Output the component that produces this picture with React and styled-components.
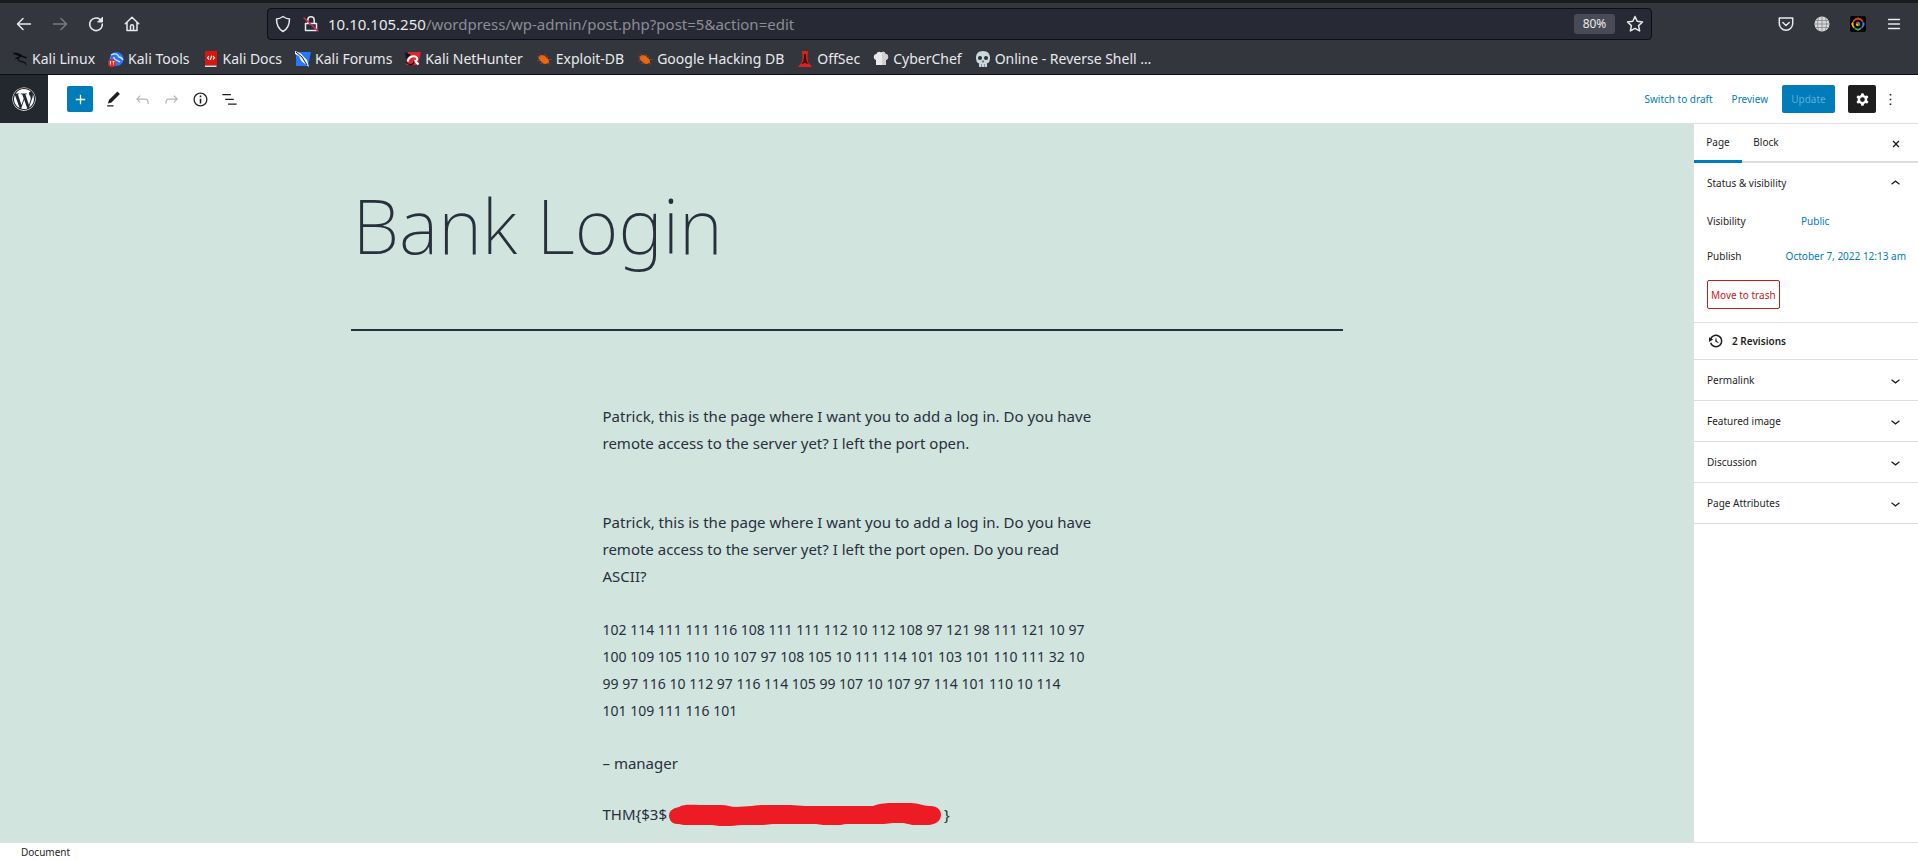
import React from "react";
import styled, { createGlobalStyle } from "styled-components";
import { FaWordpress } from "react-icons/fa";

const GlobalStyle = createGlobalStyle`
  *, *::before, *::after { box-sizing: border-box; }
  body { margin: 0; background: #fff; }
  body, button, input { font-family: "Noto Sans", "Open Sans", sans-serif; }
  button { border: 0; padding: 0; background: none; color: inherit; font-size: inherit; cursor: pointer; }
  a { text-decoration: none; color: inherit; }
  svg { display: block; flex: none; }
  h1, p, dl, dd, dt { margin: 0; }
`;

const Window = styled.div`
  display: flex;
  flex-direction: column;
  height: 100vh;
`;

/* ---------- browser chrome ---------- */

const Chrome = styled.header`
  background: #33363d;
  border-top: 3px solid #191b1f;
  border-bottom: 1px solid #0d0e12;
  color: #e8e9ec;
`;

const NavBar = styled.div`
  display: flex;
  align-items: center;
  height: 41px;
  padding: 0 15px;
`;

const NavButtons = styled.div`
  display: flex;
  gap: 18px;
  width: 252px;
`;

const IconButton = styled.button`
  display: grid;
  place-items: center;
  width: ${(p) => p.$size || 18}px;
  height: ${(p) => p.$size || 18}px;
  color: ${(p) => p.$color || "inherit"};
`;

const UrlBar = styled.form`
  flex: 1;
  display: flex;
  align-items: center;
  height: 32px;
  margin-right: 125px;
  padding: 0 7px 0 6px;
  border: 1px solid #0d0e13;
  border-radius: 4px;
  background: #272935;
  font-size: 15px;
`;

const UrlIcons = styled.div`
  display: flex;
  gap: 10px;
  margin-right: 8px;
`;

const UrlInput = styled.input`
  flex: 1;
  min-width: 0;
  padding: 0;
  border: 0;
  outline: 0;
  background: none;
  color: #8c8d94;
  font-size: 15px;
`;

const ZoomLevel = styled.button`
  width: 41px;
  height: 20px;
  margin-right: 11px;
  border-radius: 3px;
  background: #484b55;
  font-size: 12px;
`;

const Extensions = styled.div`
  display: flex;
  gap: 18px;
`;

const Bookmarks = styled.nav`
  display: flex;
  align-items: center;
  gap: 13px;
  height: 30px;
  padding: 0 12px;
`;

const Bookmark = styled.a`
  display: flex;
  align-items: center;
  gap: 4px;
  font-size: 14px;
  line-height: 20px;
  white-space: nowrap;
`;

/* ---------- editor top bar ---------- */

const EditorBar = styled.header`
  display: flex;
  align-items: center;
  height: 49px;
  padding-right: 18px;
  border-bottom: 1px solid #e0e0e0;
  background: #fff;
  color: #1e1e1e;
  font-size: 10px;
`;

const SiteLogo = styled.a`
  display: grid;
  place-items: center;
  width: 48px;
  height: 48px;
  background: #23282e;
  color: #fff;
`;

const Tools = styled.div`
  flex: 1;
  display: flex;
  align-items: center;
  gap: 9px;
  padding-left: 19px;
`;

const AddButton = styled(IconButton)`
  margin-right: 1px;
  border-radius: 2px;
  background: #007cba;
  color: #fff;
`;

const Actions = styled.div`
  display: flex;
  align-items: center;
  color: #007cba;
`;

const TextButton = styled.button`
  margin-right: 19px;
`;

const UpdateButton = styled.button`
  width: 53px;
  height: 28px;
  margin: 0 13px 0 -5px;
  border-radius: 2px;
  background: #007cba;
  color: #5fadd6;
`;

const SettingsButton = styled(IconButton)`
  margin-right: 5px;
  border-radius: 2px;
  background: #1e1e1e;
  color: #fff;
`;

/* ---------- editor body ---------- */

const Workspace = styled.div`
  flex: 1;
  display: flex;
  min-height: 0;
`;

const Canvas = styled.main`
  flex: 1;
  min-width: 0;
  overflow: hidden;
  background: #d1e4dd;
  color: #28303d;
`;

const TitleBlock = styled.div`
  max-width: 992px;
  margin: 0 auto;
  padding: 49px 2px 52px;
  border-bottom: 2px solid #28303d;
`;

const Title = styled.h1`
  font-size: 75px;
  font-weight: 200;
  line-height: 104px;
`;

const Content = styled.div`
  max-width: 488px;
  margin: 0 auto;
  padding-top: 72px;
  font-size: 15px;
  line-height: 27px;
`;

const Paragraph = styled.p`
  margin-bottom: ${(p) => p.$gap || 26}px;
  white-space: nowrap;
`;

const CodeParagraph = styled(Paragraph)`
  font-size: 14px;
`;

const FlagLine = styled(Paragraph)`
  display: flex;
  align-items: center;
  gap: 2px;
`;

/* ---------- settings sidebar ---------- */

const Sidebar = styled.aside`
  width: 225px;
  border-left: 1px solid #e0e0e0;
  background: #fff;
  color: #1e1e1e;
  font-size: 10px;
`;

const Tabs = styled.div`
  display: flex;
  align-items: stretch;
  height: 39px;
  padding-right: 13px;
  box-shadow: inset 0 -2px #ddd;
`;

const Tab = styled.button`
  width: 48px;
  border-bottom: 3px solid ${(p) => (p.$active ? "#007cba" : "transparent")};
`;

const CloseTab = styled(IconButton)`
  align-self: center;
  margin-left: auto;
`;

const Panel = styled.section`
  border-bottom: 1px solid #ddd;
`;

const PanelHeader = styled.button`
  display: flex;
  align-items: center;
  justify-content: space-between;
  width: 100%;
  height: 40px;
  padding: 0 13px;
`;

const Fields = styled.dl`
  display: grid;
  grid-template-columns: 78px 1fr;
  row-gap: 7px;
  padding: 4px 12px 0 13px;
  line-height: 28px;
  white-space: nowrap;
`;

const FieldValue = styled.dd`
  display: flex;
  justify-content: ${(p) => (p.$end ? "flex-end" : "flex-start")};
  padding-left: ${(p) => (p.$end ? 0 : 16)}px;
  color: #007cba;
`;

const TrashButton = styled.button`
  height: 29px;
  margin: 10px 13px 13px;
  padding: 0 3px;
  border: 1px solid #cc1818;
  border-radius: 2px;
  color: #cc1818;
`;

const Revisions = styled.button`
  display: flex;
  align-items: center;
  gap: 8px;
  height: 36px;
  padding: 0 14px;
  font-weight: 600;
`;

const StatusBar = styled.footer`
  height: 19px;
  padding-left: 21px;
  border-top: 1px solid #e0e0e0;
  background: #fff;
  color: #1e1e1e;
  font-size: 10px;
  line-height: 18px;
`;

/* ---------- drawings ---------- */

const Glyph = ({ d, size = 19, box = 24 }) => (
  <svg width={size} height={size} viewBox={`0 0 ${box} ${box}`} fill="currentColor" fillRule="evenodd" aria-hidden="true">
    <path d={d} />
  </svg>
);

const Line = ({ children, size = 18 }) => (
  <svg width={size} height={size} viewBox="0 0 18 18" fill="none" stroke="currentColor" strokeWidth="1.5" strokeLinecap="round" strokeLinejoin="round" aria-hidden="true">
    {children}
  </svg>
);

const Mark = ({ children }) => (
  <svg width="16" height="16" viewBox="0 0 16 16" aria-hidden="true">{children}</svg>
);

const paths = {
  plus: "M18 11.2h-5.2V6h-1.6v5.2H6v1.6h5.2V18h1.6v-5.2H18z",
  edit: "M20.1 5.1L16.9 2 6.2 12.7l-1.3 4.4 4.5-1.3L20.1 5.1zM4 20.8h8v-1.5H4v1.5z",
  undo: "M18.3 11.7c-.6-.6-1.4-.9-2.3-.9H6.7l2.9-3.3-1.1-1-4.5 5L8.5 16l1-1-2.7-2.7H16c.5 0 .9.2 1.3.5 1 1 1 3.4 1 4.5v.3h1.5v-.2c0-1.5 0-4.3-1.5-5.7z",
  redo: "M15.6 6.5l-1.1 1 2.9 3.3H8c-.9 0-1.7.3-2.3.9-1.4 1.5-1.4 4.2-1.4 5.6v.2h1.5v-.3c0-1.1 0-3.5 1-4.5.3-.3.7-.5 1.3-.5h9.2L14.5 15l1.1 1.1 4.6-4.6-4.6-5z",
  info: "M12 3.2c-4.8 0-8.8 3.9-8.8 8.8 0 4.8 3.9 8.8 8.8 8.8 4.8 0 8.8-3.9 8.8-8.8 0-4.8-4-8.8-8.8-8.8zm0 16c-4 0-7.2-3.3-7.2-7.2C4.8 8 8 4.8 12 4.8s7.2 3.3 7.2 7.2c0 4-3.2 7.2-7.2 7.2zM11 17h2v-6h-2v6zm0-8h2V7h-2v2z",
  list: "M13.8 5.2H3v1.5h10.8V5.2zm-3.6 12v1.5H21v-1.5H10.2zm7.2-6H6.6v1.5h10.8v-1.5z",
  cog: "M10.289 4.836A1 1 0 0111.275 4h1.306a1 1 0 01.987.836l.244 1.466c.787.26 1.503.679 2.108 1.218l1.393-.522a1 1 0 011.216.437l.653 1.13a1 1 0 01-.23 1.273l-1.148.944a6.025 6.025 0 010 2.435l1.149.946a1 1 0 01.23 1.272l-.653 1.13a1 1 0 01-1.216.437l-1.394-.522c-.605.54-1.32.958-2.108 1.218l-.244 1.466a1 1 0 01-.987.836h-1.306a1 1 0 01-.986-.836l-.244-1.466a5.995 5.995 0 01-2.108-1.218l-1.394.522a1 1 0 01-1.217-.436l-.653-1.131a1 1 0 01.23-1.272l1.149-.946a6.026 6.026 0 010-2.435l-1.148-.944a1 1 0 01-.23-1.272l.653-1.131a1 1 0 011.217-.437l1.393.522a5.994 5.994 0 012.108-1.218l.244-1.466zM14.929 12a3 3 0 11-6 0 3 3 0 016 0z",
  more: "M13 19h-2v-2h2v2zm0-6h-2v-2h2v2zm0-6h-2V5h2v2z",
  up: "M6.5 12.4L12 8l5.5 4.4-.9 1.2L12 10l-4.5 3.6-1-1.2z",
  down: "M17.5 11.6L12 16l-5.5-4.4.9-1.2L12 14l4.5-3.6 1 1.2z",
  close: "M12 13.4l3.700 3.700 1.400-1.400L13.400 12l3.700-3.700-1.400-1.400L12 10.600 8.300 6.900 6.900 8.300 10.600 12l-3.700 3.700 1.400 1.400L12 13.400z",
  backup: "M13.65 2.88c3.93 2.01 5.48 6.84 3.47 10.77s-6.83 5.48-10.77 3.47c-1.87-.96-3.2-2.56-3.86-4.4l1.64-1.03c.45 1.57 1.52 2.95 3.08 3.76 3.01 1.54 6.69.35 8.23-2.66 1.55-3.01.36-6.69-2.65-8.24C9.78 3.01 6.1 4.2 4.56 7.21l1.88.97-4.95 3.08-.39-5.82 1.78.91C4.9 2.4 9.75.89 13.65 2.88zm-4.36 7.83C9.11 10.53 9 10.28 9 10c0-.07.03-.12.04-.19h-.01L10 5l.97 4.81L14 13l-4.5-2.12.02-.02c-.08-.04-.16-.09-.23-.15z",
};

const Bug = () => (
  <Mark>
    <path d="M3 5.500l2-1.500 3 .5 3 2.500 2 2.500 0 2-3 1.500-3-.5-3-3-1.500-2z" fill="#f0640f" />
    <path d="M1 5l4 1M3 2.500l3 3M9 3l1 3M12 5.500l-1 2M12 8.500h3.500M5 9l-4 1M7 11l-3 2M12 12l2 1.500" stroke="#a8552a" strokeWidth=".6" />
  </Mark>
);

const bookmarks = [
  ["Kali Linux", <Mark><path d="M0 1.500c5-.5 9 1 11 3.500l4 1-1 1.500-3-1c-2-1-4 0-4 1.500 0 2 3 2 5 2.500 2 .8 2.500 2 2.500 5-1-3-2-3.700-4-4-3-.3-5-1.500-5-4l-3 1c1-2 3-3 5-3L4 4 0 4c2-.8 3-1 4-.8L0 1.500z" fill="#0b0c0f" /></Mark>],
  ["Kali Tools", <Mark><circle cx="8.500" cy="8" r="7" fill="#2777ff" /><path d="M3 4c4-2 7-1 8 2 2 0 3 1 4 3M6 6c-1 3 3 3 6 5" fill="none" stroke="#dbe8ff" strokeWidth="1.300" /><circle cx="4" cy="12" r="4" fill="#e02b2b" /><path d="M2.500 10.500v3M4.500 10.500h2M5.500 10.500v3M2 10.500h1" stroke="#fff" strokeWidth=".9" /></Mark>],
  ["Kali Docs", <Mark><path d="M2 0h12v14.500H2z" fill="#d9150f" /><path d="M2 14.500h11.500V16H2z" fill="#dadada" /><path d="M6 5L4.500 6.800 6 8.600M10 5l1.500 1.800L10 8.600M8.700 4.600l-1.400 4.400" fill="none" stroke="#fff" strokeWidth="1.100" /></Mark>],
  ["Kali Forums", <Mark><path d="M1 1h15l-3 14H1z" fill="#2777ff" /><path d="M0 0c3 1 6 2 8 5l4 4 2 7-5-4C5 10 5 6 4 5L0 3z" fill="#f2f4f8" /><path d="M1 1l6 5 5 8" fill="none" stroke="#15171c" strokeWidth="1" /></Mark>],
  ["Kali NetHunter", <Mark><path d="M3 1h13l-3 13H1z" fill="#df2430" /><path d="M0 1l6 3-5 4z" fill="#111318" /><path d="M3 10.500c0-5 7-7 9-3.500 1 2-1 3-2.500 2.500l4 4" fill="none" stroke="#fff" strokeWidth="2" /><path d="M1 11c3 4 8 3 8-1" fill="none" stroke="#111318" strokeWidth="1.200" /></Mark>],
  ["Exploit-DB", <Bug />],
  ["Google Hacking DB", <Bug />],
  ["OffSec", <Mark><path d="M5 0h6l-.5 5 .5 6 4 5H1l4-5 .5-6z" fill="#e02020" /><path d="M7.200 3h1.600l.7 7 2 3-3.500-1-3.500 1 2-3z" fill="#3a0a0c" /></Mark>],
  ["CyberChef", <Mark><path d="M3 14V9C0 8.500 0 3 3.500 3 4 .5 7 0 8 1.500 9.500 0 12 .5 12.500 3 16 3 16 8.500 13 9v5z" fill="#e9e9e9" /><path d="M9 1.500C10 0 12 .5 12.500 3 16 3 16 8.500 13 9v5H9z" fill="#cfcfcf" /></Mark>],
  ["Online - Reverse Shell …", <Mark><path d="M8 0c4.500 0 7 2.800 7 6.500 0 2-.5 2.500-.5 3.500 0 1.500-2 2-2.500 2.500V16H4v-3.500C3.500 12 1.500 11.500 1.500 10 1.500 9 1 8.500 1 6.500 1 2.800 3.500 0 8 0z" fill="#ccd6dd" /><circle cx="5" cy="7" r="2" fill="#292f33" /><circle cx="11" cy="7" r="2" fill="#292f33" /><path d="M7 11l1-1.500L9 11zM6.500 13v3M9.500 13v3" fill="#292f33" stroke="#66757f" strokeWidth=".7" /></Mark>],
];

const panels = ["Permalink", "Featured image", "Discussion", "Page Attributes"];

function BrowserChrome() {
  return (
    <Chrome>
      <NavBar>
        <NavButtons>
          <IconButton aria-label="Back"><Line><path d="M15.500 9H2.500M8 3.500L2.500 9 8 14.500" /></Line></IconButton>
          <IconButton aria-label="Forward" $color="#797b80"><Line><path d="M2.500 9h13M10 3.500L15.500 9 10 14.500" /></Line></IconButton>
          <IconButton aria-label="Reload"><Line><path d="M14.500 6.200A6.300 6.300 0 1 0 15.300 9" /><path d="M15.500 2.500V7H11z" fill="currentColor" strokeWidth="1" /></Line></IconButton>
          <IconButton aria-label="Home"><Line><path d="M2.300 8.800L9 2.300l6.700 6.500M4 7.500v8h10v-8M7.500 15.500V11c0-.8.600-1.200 1.500-1.200s1.500.4 1.500 1.200v4.500" /></Line></IconButton>
        </NavButtons>
        <UrlBar>
          <UrlIcons>
            <Line><path d="M9 1.500c2 1.500 4 2.300 6.500 2.500 0 6-2 10-6.500 12.500C4.500 14 2.500 10 2.500 4 5 3.800 7 3 9 1.500z" /></Line>
            <Line><path d="M3.500 8.500h11v7h-11zM5.800 8V5a3.200 3.200 0 0 1 6.400 0v3" /><path d="M2 3l14 13" stroke="#e22850" /></Line>
          </UrlIcons>
          <label htmlFor="url">10.10.105.250</label>
          <UrlInput id="url" defaultValue="/wordpress/wp-admin/post.php?post=5&action=edit" />
          <ZoomLevel type="button">80%</ZoomLevel>
          <IconButton type="button" aria-label="Bookmark this page"><Line><path d="M9 1.500l2.200 4.800 5.300.7-3.900 3.600 1 5.300L9 13.300l-4.600 2.600 1-5.300L1.500 7l5.300-.7z" /></Line></IconButton>
        </UrlBar>
        <Extensions>
          <IconButton aria-label="Pocket"><Line><path d="M2.300 3h13.400v5.500a6.700 6.700 0 0 1-13.400 0zM5.800 7.500L9 10.500l3.200-3" /></Line></IconButton>
          <IconButton aria-label="Proxy">
            <svg width="16" height="16" viewBox="0 0 16 16"><circle cx="8" cy="8" r="7.500" fill="#d9d9d9" /><path d="M8 0v16M0 8h16M1.500 4.500h13M1.500 11.500h13M5 1c-2 4.500-2 9.500 0 14M11 1c2 4.500 2 9.500 0 14" fill="none" stroke="#8b8d92" strokeWidth=".9" /></svg>
          </IconButton>
          <IconButton aria-label="Extension">
            <svg width="16" height="16" viewBox="0 0 16 16" fill="none"><rect width="16" height="16" rx="2" fill="#000" /><path d="M3.200 5.800A5.300 5.300 0 0 1 12.800 5.800" stroke="#ea4335" strokeWidth="1.500" /><path d="M13 6.200A5.300 5.300 0 0 1 11.700 11.800" stroke="#4285f4" strokeWidth="1.500" /><path d="M11.300 12.100A5.300 5.300 0 0 1 4.700 12.100" stroke="#34a853" strokeWidth="1.500" /><path d="M4.300 11.800A5.300 5.300 0 0 1 3 6.200" stroke="#fbbc05" strokeWidth="1.500" /><path d="M8 1v2" stroke="#ea4335" /><path d="M13.500 8H15" stroke="#4285f4" /><path d="M8 13.500V15" stroke="#34a853" /><path d="M1 8h1.500" stroke="#fbbc05" /><path d="M8 8V5.800A2.200 2.200 0 0 1 10.200 8z" fill="#4285f4" /><path d="M8 8H5.800A2.200 2.200 0 0 1 8 5.800z" fill="#ea4335" /><path d="M8 8v2.200A2.200 2.200 0 0 1 5.800 8z" fill="#fbbc05" /><path d="M8 8h2.200A2.200 2.200 0 0 1 8 10.200z" fill="#34a853" /></svg>
          </IconButton>
          <IconButton aria-label="Menu"><Line><path d="M3.500 4.500h11M3.500 9h11M3.500 13.500h11" strokeWidth="1.300" /></Line></IconButton>
        </Extensions>
      </NavBar>
      <Bookmarks>
        {bookmarks.map(([label, icon]) => (
          <Bookmark key={label} href="#">{icon}{label}</Bookmark>
        ))}
      </Bookmarks>
    </Chrome>
  );
}

function EditorHeader() {
  return (
    <EditorBar>
      <SiteLogo href="#" aria-label="View pages"><FaWordpress size={24} /></SiteLogo>
      <Tools>
        <AddButton $size={26} aria-label="Add block"><Glyph d={paths.plus} /></AddButton>
        <IconButton $size={20} aria-label="Tools"><Glyph d={paths.edit} /></IconButton>
        <IconButton $size={20} $color="#b5b5b5" aria-label="Undo"><Glyph d={paths.undo} /></IconButton>
        <IconButton $size={20} $color="#b5b5b5" aria-label="Redo"><Glyph d={paths.redo} /></IconButton>
        <IconButton $size={20} aria-label="Details"><Glyph d={paths.info} /></IconButton>
        <IconButton $size={20} aria-label="List view"><Glyph d={paths.list} /></IconButton>
      </Tools>
      <Actions>
        <TextButton>Switch to draft</TextButton>
        <TextButton>Preview</TextButton>
        <UpdateButton>Update</UpdateButton>
        <SettingsButton $size={28} aria-label="Settings"><Glyph d={paths.cog} /></SettingsButton>
        <IconButton $size={19} $color="#1e1e1e" aria-label="Options"><Glyph d={paths.more} /></IconButton>
      </Actions>
    </EditorBar>
  );
}

function SettingsSidebar() {
  return (
    <Sidebar>
      <Tabs>
        <Tab $active>Page</Tab>
        <Tab>Block</Tab>
        <CloseTab aria-label="Close settings"><Glyph d={paths.close} size={16} /></CloseTab>
      </Tabs>
      <Panel>
        <PanelHeader>Status &amp; visibility<Glyph d={paths.up} /></PanelHeader>
        <Fields>
          <dt>Visibility</dt>
          <FieldValue><button>Public</button></FieldValue>
          <dt>Publish</dt>
          <FieldValue $end><button>October 7, 2022 12:13 am</button></FieldValue>
        </Fields>
        <TrashButton>Move to trash</TrashButton>
      </Panel>
      <Panel>
        <Revisions><Glyph d={paths.backup} size={16} box={20} />2 Revisions</Revisions>
      </Panel>
      {panels.map((name) => (
        <Panel key={name}>
          <PanelHeader>{name}<Glyph d={paths.down} /></PanelHeader>
        </Panel>
      ))}
    </Sidebar>
  );
}

export default function App() {
  return (
    <Window>
      <GlobalStyle />
      <BrowserChrome />
      <EditorHeader />
      <Workspace>
        <Canvas>
          <TitleBlock><Title>Bank Login</Title></TitleBlock>
          <Content>
            <Paragraph $gap={52}>
              Patrick, this is the page where I want you to add a log in. Do you have<br />
              remote access to the server yet? I left the port open.
            </Paragraph>
            <Paragraph>
              Patrick, this is the page where I want you to add a log in. Do you have<br />
              remote access to the server yet? I left the port open. Do you read<br />
              ASCII?
            </Paragraph>
            <CodeParagraph>
              102 114 111 111 116 108 111 111 112 10 112 108 97 121 98 111 121 10 97<br />
              100 109 105 110 10 107 97 108 105 10 111 114 101 103 101 110 111 32 10<br />
              99 97 116 10 112 97 116 114 105 99 107 10 107 97 114 101 110 10 114<br />
              101 109 111 116 101
            </CodeParagraph>
            <Paragraph $gap={24}>– manager</Paragraph>
            <FlagLine>
              THM&#123;$3$
              <svg width="273" height="24" viewBox="0 0 273 24" aria-hidden="true">
                <path d="M0 13C0 7 5 5 10 4c5-3 12-2 20-2h22c6 0 10 2 15 2s10-1 16-1c8-1 12-1 20-1h18c6 0 10 1 15 1h68c8-3 14-3 20-3h18c8 0 12 3 18 3 16-1 16 18 0 19h-14c-6 0-8-2-14-2h-8c-6 1-12 1-20 1h-26c-4 0-4 1-8 1h-14c-6 0-6-1-12-1h-40c-4 0-6 1-10 1H74c-6 0-8 1-14 1h-8c-6 0-6-1-12-1H16c-4 0-4-1-8-1-5 0-8-4-8-9z" fill="#ed1c24" />
              </svg>
              &#125;
            </FlagLine>
          </Content>
        </Canvas>
        <SettingsSidebar />
      </Workspace>
      <StatusBar>Document</StatusBar>
    </Window>
  );
}
